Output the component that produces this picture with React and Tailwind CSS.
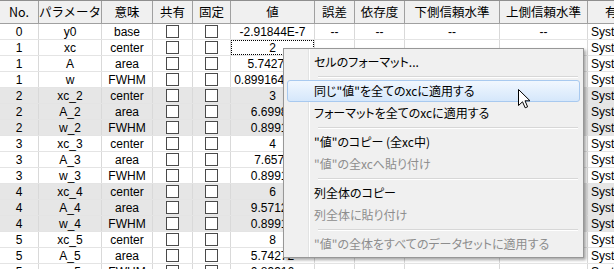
import React from "react";

const HEADERS = ["No.", "パラメータ", "意味", "共有", "固定", "値", "誤差", "依存度", "下側信頼水準", "上側信頼水準", "有効"];

// each row: no, param, meaning, value, shaded group
const ROWS = [
  ["0", "y0", "base", "-2.91844E-7", false],
  ["1", "xc", "center", "2", false],
  ["1", "A", "area", "5.742721", false],
  ["1", "w", "FWHM", "0.8991644493", false],
  ["2", "xc_2", "center", "3", true],
  ["2", "A_2", "area", "6.69984", true],
  ["2", "w_2", "FWHM", "0.89916", true],
  ["3", "xc_3", "center", "4", false],
  ["3", "A_3", "area", "7.6571", false],
  ["3", "w_3", "FWHM", "0.89916", false],
  ["4", "xc_4", "center", "6", true],
  ["4", "A_4", "area", "9.57121", true],
  ["4", "w_4", "FWHM", "0.89916", true],
  ["5", "xc_5", "center", "8", false],
  ["5", "A_5", "area", "5.74272", false],
  ["5", "w_5", "FWHM", "0.89916", false],
];

const MENU = [
  { label: "セルのフォーマット...", sepAfter: true },
  { label: "同じ\"値\"を全てのxcに適用する", active: true },
  { label: "フォーマットを全てのxcに適用する", sepAfter: true },
  { label: "\"値\"のコピー (全xc中)" },
  { label: "\"値\"の全xcへ貼り付け", disabled: true, sepAfter: true },
  { label: "列全体のコピー" },
  { label: "列全体に貼り付け", disabled: true, sepAfter: true },
  { label: "\"値\"の全体をすべてのデータセットに適用する", disabled: true },
];

const GRID = "grid grid-cols-[39px_63px_51px_40px_38px_84px_40px_50px_95px_88px_60px]";

const Checkbox = () => (
  <div className="h-[13px] w-[13px] border border-[#4a4a4a] bg-white" />
);

const Cell = ({ children, className = "" }) => (
  <div className={`flex items-center justify-center overflow-hidden whitespace-nowrap border-r border-[#d9d9d9] ${className}`}>
    {children}
  </div>
);

const Cursor = () => (
  <svg width="13" height="20" viewBox="0 0 13 20" className="absolute left-[518px] top-[89px]">
    <path
      d="M0.5 0.5 L0.5 16.5 L4.5 12.8 L7.2 18.8 L9.6 17.8 L7 11.8 L12 11.8 Z"
      fill="#fff"
      stroke="#000"
      strokeWidth="1"
      strokeLinejoin="miter"
    />
  </svg>
);

export default function App() {
  return (
    <div className="relative h-[269px] w-[614px] overflow-hidden bg-white font-['Liberation_Sans','Noto_Sans_CJK_JP',sans-serif] text-[12px] text-black">
      {/* Header */}
      <div className={`${GRID} h-[24px] border-t border-b border-t-[#8e8e8e] border-b-[#a0a0a0] bg-[#f0f0f0]`}>
        {HEADERS.map((h) => (
          <div
            key={h}
            className="flex items-center justify-center overflow-hidden whitespace-nowrap border-r border-[#a0a0a0] font-['Noto_Sans_CJK_JP',sans-serif] text-[12.5px] leading-none"
          >
            {h}
          </div>
        ))}
      </div>

      {/* Rows */}
      {ROWS.map(([no, param, meaning, value, shaded], i) => (
        <div
          key={i}
          className={`${GRID} h-[16px] border-b border-[#e4e4e4] leading-none ${shaded ? "bg-[#e6e6e6]" : "bg-white"}`}
        >
          <Cell>{no}</Cell>
          <Cell>{param}</Cell>
          <Cell>{meaning}</Cell>
          <Cell><Checkbox /></Cell>
          <Cell><Checkbox /></Cell>
          <Cell className="relative">
            {i === 1 && <div className="absolute inset-0 border border-dotted border-black" />}
            {value}
          </Cell>
          <Cell>--</Cell>
          <Cell>--</Cell>
          <Cell>--</Cell>
          <Cell>--</Cell>
          <Cell className="justify-start pl-[3px]">System</Cell>
        </div>
      ))}

      {/* Context menu */}
      <div className="absolute left-[283px] top-[48px] w-[301px] border border-[#979797] bg-[#f0f0f0] pt-[2px] pb-[2px] font-['Noto_Sans_CJK_JP',sans-serif] text-[12px] leading-none shadow-[2px_2px_3px_rgba(0,0,0,0.35)] [font-feature-settings:'palt']">
        <div className="absolute bottom-0 left-[24px] top-0 w-[2px] border-l border-r border-l-[#e2e3e3] border-r-white" />
        {MENU.map((m) => (
          <React.Fragment key={m.label}>
            <div
              className={`relative mx-[3px] flex h-[22px] items-center rounded-[3px] border pl-[26px] ${
                m.active
                  ? "border-[#a8c9ef] bg-gradient-to-b from-[#f1f7fe] to-[#d5e7fb]"
                  : "border-transparent"
              } ${m.disabled ? "text-[#8d8d8d]" : "text-black"}`}
            >
              {m.label}
            </div>
            {m.sepAfter && (
              <div className="relative flex h-[7px] flex-col justify-center pl-[34px] pr-[5px]">
                <div className="h-px bg-[#d7d7d7]" />
                <div className="h-px bg-white" />
              </div>
            )}
          </React.Fragment>
        ))}
      </div>

      <Cursor />
    </div>
  );
}
